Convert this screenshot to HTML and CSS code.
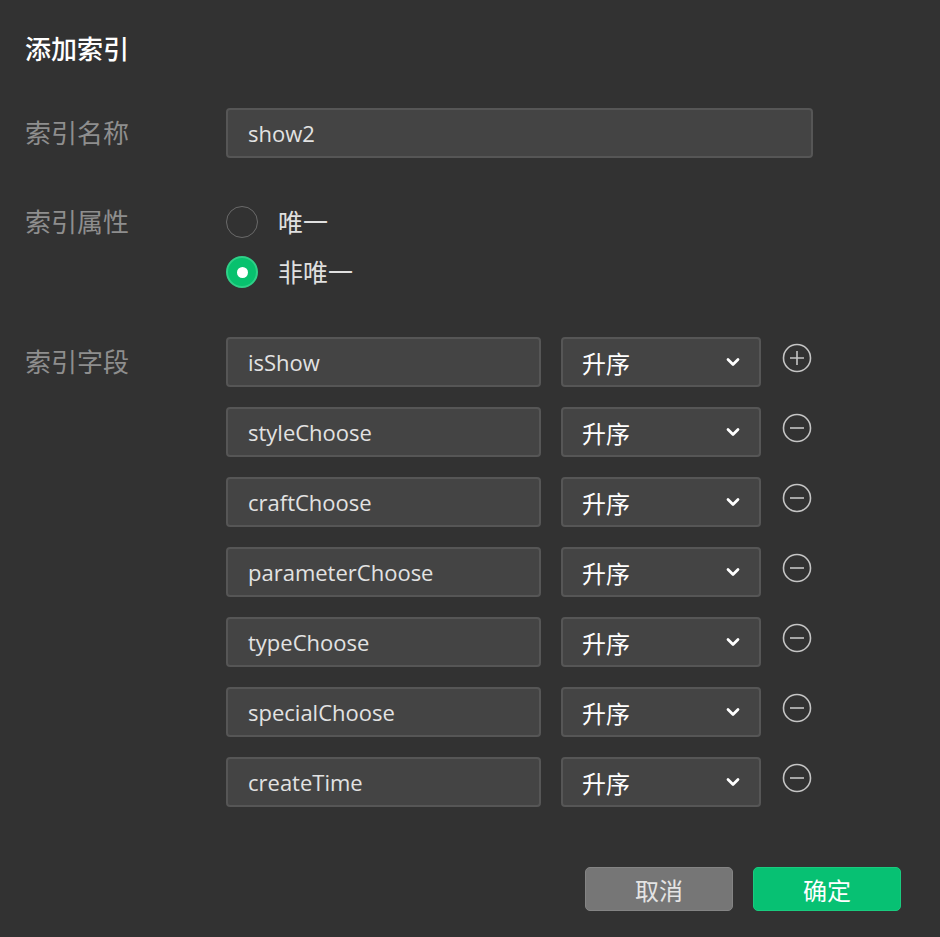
FILE: index.html
```html
<!DOCTYPE html>
<html lang="zh-CN">
  <head>
    <meta charset="UTF-8" />
    <meta name="viewport" content="width=device-width, initial-scale=1.0" />
    <title>添加索引</title>
    <link rel="stylesheet" href="styles.css">
  </head>
  <body>
    <div class="dialog">
      <h1 class="title">添加索引</h1>

      <div class="form-row row-name">
        <label class="label">索引名称</label>
        <div class="field">
          <div class="input wide">show2</div>
        </div>
      </div>

      <div class="form-row row-attr">
        <label class="label">索引属性</label>
        <div class="field radios">
          <div class="radio"><span class="dot"></span>唯一</div>
          <div class="radio checked"><span class="dot"></span>非唯一</div>
        </div>
      </div>

      <div class="form-row row-fields">
        <label class="label">索引字段</label>
        <div class="field fields">
          <div class="key-row">
            <div class="input key">isShow</div>
            <div class="select">升序<svg class="caret" viewBox="0 0 16 16"><path d="M4 6l4 4 4-4" /></svg></div>
            <svg class="op" viewBox="0 0 30 30"><circle cx="15" cy="15" r="13.5" /><path d="M8 15h14M15 8v14" /></svg>
          </div>
          <div class="key-row">
            <div class="input key">styleChoose</div>
            <div class="select">升序<svg class="caret" viewBox="0 0 16 16"><path d="M4 6l4 4 4-4" /></svg></div>
            <svg class="op" viewBox="0 0 30 30"><circle cx="15" cy="15" r="13.5" /><path d="M8 15h14" /></svg>
          </div>
          <div class="key-row">
            <div class="input key">craftChoose</div>
            <div class="select">升序<svg class="caret" viewBox="0 0 16 16"><path d="M4 6l4 4 4-4" /></svg></div>
            <svg class="op" viewBox="0 0 30 30"><circle cx="15" cy="15" r="13.5" /><path d="M8 15h14" /></svg>
          </div>
          <div class="key-row">
            <div class="input key">parameterChoose</div>
            <div class="select">升序<svg class="caret" viewBox="0 0 16 16"><path d="M4 6l4 4 4-4" /></svg></div>
            <svg class="op" viewBox="0 0 30 30"><circle cx="15" cy="15" r="13.5" /><path d="M8 15h14" /></svg>
          </div>
          <div class="key-row">
            <div class="input key">typeChoose</div>
            <div class="select">升序<svg class="caret" viewBox="0 0 16 16"><path d="M4 6l4 4 4-4" /></svg></div>
            <svg class="op" viewBox="0 0 30 30"><circle cx="15" cy="15" r="13.5" /><path d="M8 15h14" /></svg>
          </div>
          <div class="key-row">
            <div class="input key">specialChoose</div>
            <div class="select">升序<svg class="caret" viewBox="0 0 16 16"><path d="M4 6l4 4 4-4" /></svg></div>
            <svg class="op" viewBox="0 0 30 30"><circle cx="15" cy="15" r="13.5" /><path d="M8 15h14" /></svg>
          </div>
          <div class="key-row">
            <div class="input key">createTime</div>
            <div class="select">升序<svg class="caret" viewBox="0 0 16 16"><path d="M4 6l4 4 4-4" /></svg></div>
            <svg class="op" viewBox="0 0 30 30"><circle cx="15" cy="15" r="13.5" /><path d="M8 15h14" /></svg>
          </div>
        </div>
      </div>

      <div class="actions">
        <button class="btn cancel">取消</button>
        <button class="btn confirm">确定</button>
      </div>
    </div>
  </body>
</html>
```

FILE: styles.css
```css
html,
body {
  margin: 0;
  height: 100%;
  background-color: #323232;
}

body {
  font-family: "Open Sans", "Noto Sans CJK SC", sans-serif;
  color: #e6e6e6;
}

.dialog {
  padding: 28px 39px 0 25px;
}

.title {
  margin: 0;
  font-size: 26px;
  font-weight: 500;
  line-height: 42px;
  color: #ffffff;
}

.form-row {
  display: flex;
  align-items: flex-start;
}

.label {
  width: 201px;
  flex: none;
  font-size: 26px;
  line-height: 50px;
  color: #8e8e8e;
}

.row-name {
  margin-top: 38px;
}

.row-attr {
  margin-top: 39px;
}

.row-fields {
  margin-top: 49px;
}

.input {
  box-sizing: border-box;
  height: 50px;
  padding: 0 20px;
  background-color: #444444;
  border: 2px solid #565656;
  border-radius: 4px;
  font-size: 22px;
  line-height: 46px;
  color: #e2e2e2;
}

.input.wide {
  width: 587px;
}

.radios {
  display: flex;
  flex-direction: column;
  gap: 18px;
  padding-top: 9px;
}

.radio {
  display: flex;
  align-items: center;
  gap: 20px;
  font-size: 25px;
  line-height: 32px;
  color: #e0e0e0;
}

.dot {
  box-sizing: border-box;
  width: 32px;
  height: 32px;
  border-radius: 50%;
  border: 1.5px solid #6a6a6a;
  display: grid;
  place-items: center;
}

.radio.checked .dot {
  background-color: #07c16e;
  border: 2px solid #2fd088;
}

.radio.checked .dot::after {
  content: "";
  width: 11px;
  height: 11px;
  border-radius: 50%;
  background-color: #ffffff;
}

.fields {
  display: flex;
  flex-direction: column;
  gap: 20px;
}

.key-row {
  display: flex;
  align-items: center;
}

.input.key {
  width: 315px;
}

.select {
  box-sizing: border-box;
  width: 200px;
  height: 50px;
  margin-left: 20px;
  padding: 0 16px 0 19px;
  display: flex;
  align-items: center;
  justify-content: space-between;
  background-color: #444444;
  border: 2px solid #565656;
  border-radius: 4px;
  font-size: 24px;
  color: #ffffff;
}

.caret {
  width: 20px;
  height: 20px;
  fill: none;
  stroke: #ffffff;
  stroke-width: 2.2;
  stroke-linecap: round;
  stroke-linejoin: round;
}

.op {
  width: 30px;
  height: 30px;
  margin-left: 21px;
  margin-top: -8px;
  fill: none;
  stroke: #c4c4c4;
  stroke-width: 1.6;
}

.actions {
  display: flex;
  justify-content: flex-end;
  gap: 20px;
  margin-top: 60px;
}

.btn {
  box-sizing: border-box;
  width: 148px;
  height: 44px;
  border-radius: 5px;
  font-family: "Open Sans", "Noto Sans CJK SC", sans-serif;
  font-size: 24px;
  cursor: pointer;
}

.cancel {
  background-color: #767676;
  border: 1px solid #848484;
  color: #e4e4e4;
}

.confirm {
  background-color: #07c173;
  border: 1px solid #19cb7f;
  color: #ffffff;
}
```
